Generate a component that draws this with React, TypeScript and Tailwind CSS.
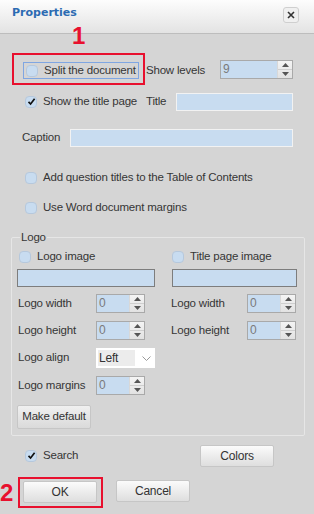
import React from "react";

const font = { fontFamily: '"Liberation Sans", Arial, sans-serif' };

function Check({ checked = false }: { checked?: boolean }) {
  return (
    <span className="flex h-[12px] w-[12px] shrink-0 items-center justify-center rounded-[4px] border border-[#b6c8dc] bg-[#c8dcf0]">
      {checked && (
        <svg width="9" height="9" viewBox="0 0 9 9">
          <path d="M1.5 4.8 L3.6 7 L7.6 1.8" stroke="#111" strokeWidth="1.7" fill="none" />
        </svg>
      )}
    </span>
  );
}

function Spinner({ value, w }: { value: string; w: string }) {
  return (
    <div className={`flex h-[19px] ${w} border border-[#a9a9a9] bg-[#c8dcf0]`}>
      <div className="flex-1 pl-[2px] text-[12px] leading-[17px] text-[#7a7a7a]">{value}</div>
      <div className="flex w-[15px] flex-col border-l border-[#d8d8d8] bg-gradient-to-b from-[#f4f4f4] to-[#e2e2e2]">
        <div className="flex flex-1 items-center justify-center border-b border-[#cfcfcf]">
          <svg width="7" height="4" viewBox="0 0 7 4">
            <path d="M0 4 L3.5 0 L7 4 Z" fill="#555" />
          </svg>
        </div>
        <div className="flex flex-1 items-center justify-center">
          <svg width="7" height="4" viewBox="0 0 7 4">
            <path d="M0 0 L7 0 L3.5 4 Z" fill="#555" />
          </svg>
        </div>
      </div>
    </div>
  );
}

function Btn({ label, w }: { label: string; w: string }) {
  return (
    <div
      className={`flex h-[22px] ${w} items-center justify-center rounded-[2px] border border-[#c6c6c6] bg-gradient-to-b from-[#fbfbfb] to-[#dedede] text-[12px] text-[#333]`}
    >
      {label}
    </div>
  );
}

export default function App() {
  return (
    <div className="relative h-[514px] w-[314px] overflow-hidden bg-[#d5d5d5] text-[11.5px] tracking-[-0.2px] text-[#353535]" style={font}>
      {/* header */}
      <div className="flex h-[34px] items-center justify-between border-b border-[#bdbdbd] bg-gradient-to-b from-[#fdfdfd] to-[#e3e3e3] pl-[12px] pr-[15px]">
        <span
          className="mt-[-6px] text-[11px] font-bold tracking-normal text-[#2c6bb2]"
          style={{ fontFamily: '"DejaVu Sans", Verdana, sans-serif' }}
        >
          Properties
        </span>
        <div className="mt-[-4px] flex h-[16px] w-[16px] items-center justify-center rounded-[3px] border border-[#cfcfcf] bg-[#f0f0f0]">
          <svg width="8" height="8" viewBox="0 0 8 8">
            <path d="M1 1 L7 7 M7 1 L1 7" stroke="#333" strokeWidth="1.6" />
          </svg>
        </div>
      </div>

      {/* annotation 1 */}
      <div className="absolute left-[72px] top-[22px] text-[24px] font-bold leading-[28px] tracking-normal text-[#e8102e]">1</div>

      {/* row 1 */}
      <div className="mt-[19px] flex h-[32px] items-center">
        <div className="ml-[12px] flex h-[32px] w-[133px] items-center border-2 border-[#e8102e] pl-[9px] pt-[3px]">
          <div className="flex h-[17px] w-[116px] items-center gap-[6px] whitespace-nowrap border border-[#7fa6e2] pl-[2px]">
            <Check />
            <span>Split the document</span>
          </div>
        </div>
        <span className="ml-[1px] mt-[3px] w-[74px] whitespace-nowrap">Show levels</span>
        <Spinner value="9" w="w-[73px]" />
      </div>

      {/* row 2 */}
      <div className="mt-[8px] flex h-[17px] items-center whitespace-nowrap">
        <div className="ml-[25px]">
          <Check checked />
        </div>
        <span className="ml-[6px] w-[103px]">Show the title page</span>
        <span className="mt-[1px] w-[30px]">Title</span>
        <div className="h-[18px] w-[117px] border border-[#f2f2f2] bg-[#c8dcf0]" />
      </div>

      {/* caption */}
      <div className="mt-[19px] flex h-[18px] items-center">
        <span className="ml-[22px] w-[48px]">Caption</span>
        <div className="h-[18px] w-[223px] border border-[#f2f2f2] bg-[#c8dcf0]" />
      </div>

      {/* add question titles */}
      <div className="mt-[25px] flex h-[12px] items-center whitespace-nowrap">
        <div className="ml-[25px]">
          <Check />
        </div>
        <span className="ml-[6px]">Add question titles to the Table of Contents</span>
      </div>
      <div className="mt-[18px] flex h-[12px] items-center whitespace-nowrap">
        <div className="ml-[25px]">
          <Check />
        </div>
        <span className="ml-[6px]">Use Word document margins</span>
      </div>

      {/* Logo fieldset */}
      <fieldset className="ml-[11px] mt-[16px] h-[206px] w-[294px] rounded-[2px] border border-[#e6e6e6] px-[5px]">
        <legend className="ml-[3px] px-[1px] leading-[14px]">Logo</legend>
        <div className="mt-[7px] flex h-[12px] items-center whitespace-nowrap">
          <div className="flex w-[155px] items-center pl-[2px]">
            <Check />
            <span className="ml-[6px]">Logo image</span>
          </div>
          <div className="flex items-center">
            <Check />
            <span className="ml-[6px]">Title page image</span>
          </div>
        </div>
        <div className="mt-[6px] flex h-[18px]">
          <div className="h-[18px] w-[138px] border border-[#7d7d7d] bg-[#c8dcf0]" />
          <div className="ml-[17px] h-[18px] w-[125px] border border-[#7d7d7d] bg-[#c8dcf0]" />
        </div>
        <div className="mt-[7px] flex h-[19px] items-center whitespace-nowrap">
          <span className="ml-[1px] w-[78px]">Logo width</span>
          <Spinner value="0" w="w-[49px]" />
          <span className="ml-[26px] w-[76px]">Logo width</span>
          <Spinner value="0" w="w-[49px]" />
        </div>
        <div className="mt-[8px] flex h-[19px] items-center whitespace-nowrap">
          <span className="ml-[1px] w-[78px]">Logo height</span>
          <Spinner value="0" w="w-[49px]" />
          <span className="ml-[26px] w-[76px]">Logo height</span>
          <Spinner value="0" w="w-[49px]" />
        </div>
        <div className="mt-[8px] flex h-[20px] items-center whitespace-nowrap">
          <span className="ml-[1px] w-[78px]">Logo align</span>
          <div className="flex h-[20px] w-[59px] items-center bg-white pl-[2px]">
            <div className="h-[16px] w-[37px] bg-[#ececec] pl-[1px] text-[12px] leading-[16px] text-[#333]">Left</div>
            <svg className="ml-[7px]" width="9" height="5" viewBox="0 0 9 5">
              <path d="M0.5 0.5 L4.5 4.5 L8.5 0.5" stroke="#999" strokeWidth="1" fill="none" />
            </svg>
          </div>
        </div>
        <div className="mt-[8px] flex h-[19px] items-center whitespace-nowrap">
          <span className="ml-[1px] w-[78px]">Logo margins</span>
          <Spinner value="0" w="w-[49px]" />
        </div>
        <div className="mt-[10px] flex">
          <div className="flex h-[24px] w-[74px] items-center justify-center whitespace-nowrap rounded-[2px] border border-[#c6c6c6] bg-gradient-to-b from-[#f0f0f0] to-[#dadada] text-[#333]">
            Make default
          </div>
        </div>
      </fieldset>

      {/* search + colors */}
      <div className="mt-[8px] flex h-[23px] items-center">
        <div className="ml-[25px]">
          <Check checked />
        </div>
        <span className="ml-[6px] w-[157px]">Search</span>
        <Btn label="Colors" w="w-[74px]" />
      </div>

      {/* OK / Cancel */}
      <div className="mt-[10px] flex items-center">
        <span className="w-[18px] text-[24px] font-bold leading-[28px] tracking-normal text-[#e8102e]">2</span>
        <div className="h-[31px] w-[85px] border-2 border-[#e8102e] pl-[3px] pt-[2px]">
          <Btn label="OK" w="w-[74px]" />
        </div>
        <div className="ml-[13px] mt-[-4px]">
          <Btn label="Cancel" w="w-[74px]" />
        </div>
      </div>
    </div>
  );
}
